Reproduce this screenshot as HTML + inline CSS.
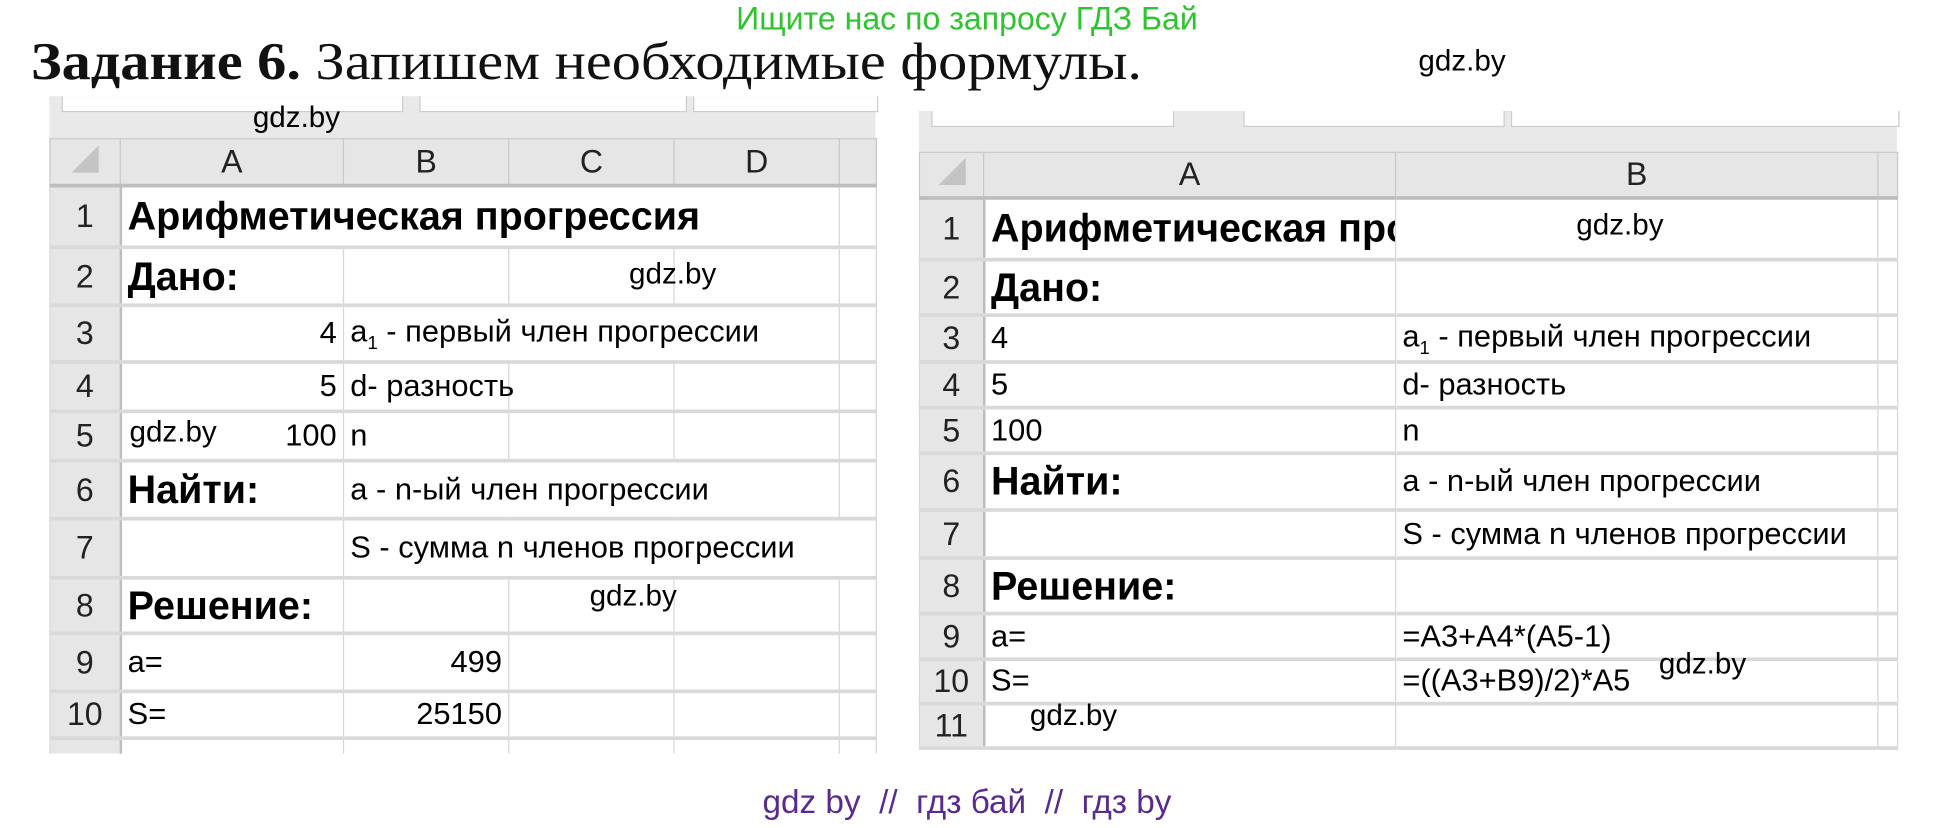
<!DOCTYPE html>
<html><head><meta charset="utf-8"><style>
html,body{margin:0;padding:0;background:#fff;overflow:hidden}
#w{position:absolute;left:0;top:0;width:1568px;height:671px;transform:scale(1.2334);transform-origin:0 0;font-family:"Liberation Sans",sans-serif}
.a{position:absolute;white-space:nowrap}
.wm{position:absolute;font-size:24px;color:#000;white-space:nowrap}
table{position:absolute;border-collapse:collapse;table-layout:fixed;font-family:"Liberation Sans",sans-serif;font-size:25px;color:#000}
td{border:1px solid #d6d6d6;border-bottom:3px solid #d9d9d9;padding:0 5px;white-space:nowrap;overflow:visible}
td.h{background:#e6e6e6;text-align:center;color:#222;font-size:26px;border-color:#c8c8c8}
td.r{background:#e6e6e6;text-align:center;color:#222;font-size:26px;border-right:2px solid #bdbdbd;padding:0}
tr.hd td{border-bottom:3px solid #bdbdbd}
.b{font-weight:bold;font-size:32px}
.rt{text-align:right}
.tabs{position:absolute;background:#e9e9e9}
.tab{position:absolute;background:#fff;border:1px solid #ccc;border-top:none}
</style></head><body><div id="w">
<div class="a" style="left:0;width:1568px;text-align:center;top:0px;font-size:26px;color:#2dc52d">Ищите нас по запросу ГДЗ Бай</div>
<div class="a" style="left:25px;top:26px;font-family:'Liberation Serif',serif;font-size:43px;color:#111;transform:scaleX(1.1);transform-origin:0 0"><b>Задание 6.</b> Запишем необходимые формулы.</div>
<div class="wm" style="left:1150px;top:36px">gdz.by</div>

<div class="tabs" style="left:40px;top:78px;width:670px;height:34px"></div>
<div class="tab" style="left:50px;top:78px;width:275px;height:12px"></div>
<div class="tab" style="left:340px;top:78px;width:215px;height:12px"></div>
<div class="tab" style="left:562px;top:78px;width:148px;height:12px"></div>
<table style="left:40px;top:112px;width:670px">
<colgroup><col style="width:57px"><col style="width:181px"><col style="width:134px"><col style="width:134px"><col style="width:134px"><col style="width:30px"></colgroup>
<tr class="hd" style="height:38px"><td class="h"><span style="display:inline-block;width:0;height:0;border-left:22px solid transparent;border-bottom:22px solid #c4c4c4"></span></td><td class="h">A</td><td class="h">B</td><td class="h">C</td><td class="h">D</td><td class="h"></td></tr>
<tr style="height:50px"><td class="r">1</td><td class="b" colspan="4" style="border-right:none">Арифметическая прогрессия</td><td></td></tr>
<tr style="height:47px"><td class="r">2</td><td class="b">Дано:</td><td></td><td></td><td></td><td></td></tr>
<tr style="height:46px"><td class="r">3</td><td class="rt">4</td><td colspan="3">a<sub style="font-size:15px">1</sub> - первый член прогрессии</td><td></td></tr>
<tr style="height:40px"><td class="r">4</td><td class="rt">5</td><td>d- разность</td><td></td><td></td><td></td></tr>
<tr style="height:40px"><td class="r">5</td><td class="rt">100</td><td>n</td><td></td><td></td><td></td></tr>
<tr style="height:47px"><td class="r">6</td><td class="b">Найти:</td><td colspan="3">a - n-ый член прогрессии</td><td></td></tr>
<tr style="height:48px"><td class="r">7</td><td></td><td colspan="4">S - сумма n членов прогрессии</td></tr>
<tr style="height:45px"><td class="r">8</td><td class="b">Решение:</td><td></td><td></td><td></td><td></td></tr>
<tr style="height:47px"><td class="r">9</td><td>a=</td><td class="rt">499</td><td></td><td></td><td></td></tr>
<tr style="height:38px"><td class="r">10</td><td>S=</td><td class="rt">25150</td><td></td><td></td><td></td></tr>
<tr style="height:12px"><td class="r" style="border-bottom:none"></td><td style="border-bottom:none"></td><td style="border-bottom:none"></td><td style="border-bottom:none"></td><td style="border-bottom:none"></td><td style="border-bottom:none"></td></tr>
</table>

<div class="tabs" style="left:745px;top:90px;width:793px;height:33px"></div>
<div class="tab" style="left:755px;top:90px;width:195px;height:12px"></div>
<div class="tab" style="left:1008px;top:90px;width:210px;height:12px"></div>
<div class="tab" style="left:1225px;top:90px;width:313px;height:12px"></div>
<table style="left:745px;top:123px;width:793px">
<colgroup><col style="width:52px"><col style="width:334px"><col style="width:391px"><col style="width:16px"></colgroup>
<tr class="hd" style="height:37px"><td class="h"><span style="display:inline-block;width:0;height:0;border-left:22px solid transparent;border-bottom:22px solid #c4c4c4"></span></td><td class="h">A</td><td class="h">B</td><td class="h"></td></tr>
<tr style="height:50px"><td class="r">1</td><td class="b" style="overflow:hidden">Арифметическая про</td><td></td><td></td></tr>
<tr style="height:45px"><td class="r">2</td><td class="b">Дано:</td><td></td><td></td></tr>
<tr style="height:38px"><td class="r">3</td><td>4</td><td>a<sub style="font-size:15px">1</sub> - первый член прогрессии</td><td></td></tr>
<tr style="height:37px"><td class="r">4</td><td>5</td><td>d- разность</td><td></td></tr>
<tr style="height:37px"><td class="r">5</td><td>100</td><td>n</td><td></td></tr>
<tr style="height:46px"><td class="r">6</td><td class="b">Найти:</td><td>a - n-ый член прогрессии</td><td></td></tr>
<tr style="height:39px"><td class="r">7</td><td></td><td>S - сумма n членов прогрессии</td><td></td></tr>
<tr style="height:45px"><td class="r">8</td><td class="b">Решение:</td><td></td><td></td></tr>
<tr style="height:37px"><td class="r">9</td><td>a=</td><td>=A3+A4*(A5-1)</td><td></td></tr>
<tr style="height:36px"><td class="r">10</td><td>S=</td><td>=((A3+B9)/2)*A5</td><td></td></tr>
<tr style="height:36px"><td class="r">11</td><td></td><td></td><td></td></tr>
</table>

<div class="wm" style="left:205px;top:82px">gdz.by</div>
<div class="wm" style="left:510px;top:209px">gdz.by</div>
<div class="wm" style="left:105px;top:337px">gdz.by</div>
<div class="wm" style="left:478px;top:470px">gdz.by</div>
<div class="wm" style="left:1278px;top:169px">gdz.by</div>
<div class="wm" style="left:1345px;top:525px">gdz.by</div>
<div class="wm" style="left:835px;top:567px">gdz.by</div>
<div class="a" style="left:0;width:1568px;text-align:center;top:635px;font-size:27px;color:#5a2a91">gdz by &nbsp;// &nbsp;гдз бай &nbsp;// &nbsp;гдз by</div>
</div></body></html>
